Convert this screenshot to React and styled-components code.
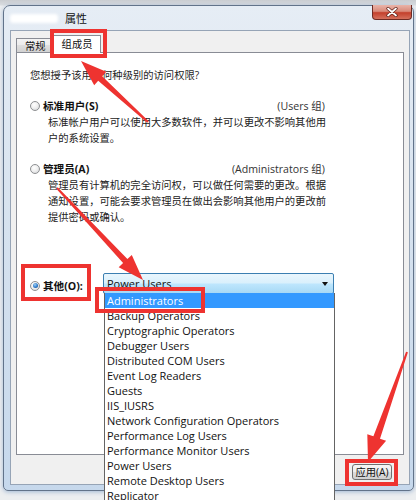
import React from "react";
import styled, { createGlobalStyle } from "styled-components";

const GlobalStyle = createGlobalStyle`
  html, body { margin: 0; padding: 0; overflow: hidden; }
  body {
    background: #e6e8eb;
    font-family: "Open Sans", "Noto Sans CJK SC", sans-serif;
    color: #1e1e1e;
  }
`;

const Page = styled.div`
  position: relative;
  width: 416px;
  height: 500px;
  overflow: hidden;
  box-sizing: border-box;
  padding: 5px 0 0 3px;
  background: linear-gradient(180deg, #c9ccd0 0, #d9dce0 5px, #eceef0 6px);
`;

const Window = styled.div`
  width: 411px;
  height: 486px;
  box-sizing: border-box;
  border: 1px solid #62738a;
  border-radius: 7px 7px 5px 5px;
  background: linear-gradient(180deg, #e6edf5 0%, #d8e3ef 40%, #c6d8ec 100%);
  box-shadow: 0 1px 4px rgba(70, 120, 180, 0.45);
  display: flex;
  flex-direction: column;
`;

const TitleBar = styled.div`
  height: 24px;
  display: flex;
  align-items: flex-start;
  padding-left: 6px;
  flex: none;
`;

const Title = styled.div`
  display: flex;
  align-items: center;
  margin-top: 6px;
  font-size: 11px;
  line-height: 13px;
  color: #111;
`;

const BlurName = styled.span`
  display: inline-block;
  width: 48px;
  height: 9px;
  margin-right: 7px;
  background: #ffffff;
  filter: blur(1.5px);
  border-radius: 3px;
`;

const CloseButton = styled.div`
  margin-left: auto;
  margin-right: 1px;
  margin-top: -1px;
  width: 40px;
  height: 15px;
  box-sizing: border-box;
  border: 1px solid #6e2a22;
  border-top: none;
  border-radius: 0 0 4px 4px;
  background: linear-gradient(180deg, #e9b3a8 0%, #d98a7a 45%, #c4402c 55%, #d5705c 100%);
  display: flex;
  align-items: center;
  justify-content: center;
`;

const Body = styled.div`
  flex: 1;
  margin: 0 3px 5px 6px;
  background: #f0f0f0;
  border: 1px solid #96a4b6;
  display: flex;
  flex-direction: column;
`;

const TabRow = styled.div`
  height: 21px;
  display: flex;
  align-items: flex-end;
  padding-left: 5px;
  flex: none;
`;

const Tab = styled.div`
  position: relative;
  box-sizing: border-box;
  border: 1px solid #898c95;
  border-bottom: none;
  font-size: 10.3px;
  text-align: center;
  color: #111;
  height: ${(p) => (p.$active ? "18px" : "14px")};
  line-height: ${(p) => (p.$active ? "17px" : "14px")};
  padding: 0 ${(p) => (p.$active ? "8px" : "8px")};
  margin: ${(p) => (p.$active ? "0 0 -1px -2px" : "0")};
  z-index: ${(p) => (p.$active ? 2 : 1)};
  background: ${(p) =>
    p.$active
      ? "#ffffff"
      : "linear-gradient(180deg, #f3f3f3 0%, #ebebeb 50%, #dedede 50%, #d2d2d2 100%)"};
`;

const Panel = styled.div`
  position: relative;
  height: 403px;
  margin: 0 5px;
  box-sizing: border-box;
  border: 1px solid #898c95;
  background: #ffffff;
  padding: 14px 0 0 13px;
  flex: none;
`;

const Question = styled.div`
  font-size: 10.3px;
  line-height: 16px;
`;

const OptionHeader = styled.div`
  display: flex;
  align-items: center;
  width: 295px;
  height: 16px;
  margin-top: 15px;
`;

const Radio = styled.span`
  position: relative;
  flex: none;
  width: 10px;
  height: 10px;
  box-sizing: border-box;
  border-radius: 50%;
  border: 1px solid #8e9092;
  background: radial-gradient(circle at 40% 35%, #ffffff 0%, #f0f0f0 45%, #cfd2d5 100%);
  margin-right: 3px;
  &::after {
    content: "";
    display: ${(p) => (p.$checked ? "block" : "none")};
    position: absolute;
    left: 1.5px;
    top: 1.5px;
    width: 5px;
    height: 5px;
    border-radius: 50%;
    background: radial-gradient(circle at 40% 35%, #9fd0f5 0%, #2f7ccc 55%, #103f7a 100%);
  }
`;

const Label = styled.span`
  font-size: 10.6px;
  font-weight: bold;
  line-height: 16px;
  color: #111;
`;

const GroupTag = styled.span`
  margin-left: auto;
  font-size: 10.6px;
  line-height: 16px;
  color: #333;
`;

const Desc = styled.div`
  margin-left: 18px;
  font-size: 10.3px;
  line-height: 16px;
  color: #222;
  white-space: nowrap;
`;

const OtherRow = styled.div`
  display: grid;
  grid-template-columns: 73px 231px;
  align-items: center;
  height: 21px;
  margin-top: 48px;
`;

const OtherLabel = styled.div`
  display: flex;
  align-items: center;
  padding-top: 4px;
`;

const Combo = styled.div`
  position: relative;
  height: 21px;
  box-sizing: border-box;
  border: 1px solid #3c7fb1;
  border-radius: 2px;
  background: linear-gradient(180deg, #eaf6fd 0%, #d9f0fc 48%, #bee6fd 52%, #a7d9f5 100%);
  display: flex;
  align-items: center;
  padding-left: 3px;
  font-size: 11px;
  color: #111;
`;

const ComboArrow = styled.span`
  margin-left: auto;
  margin-right: 5px;
  width: 0;
  height: 0;
  border-left: 3.5px solid transparent;
  border-right: 3.5px solid transparent;
  border-top: 4px solid #111;
`;

const DropList = styled.div`
  position: absolute;
  top: 100%;
  left: 0;
  width: 231px;
  box-sizing: border-box;
  border: 1px solid #646464;
  border-top: none;
  background: #ffffff;
  z-index: 5;
`;

const DropItem = styled.div`
  height: 15px;
  line-height: 15px;
  padding-left: 2px;
  font-size: 11px;
  white-space: nowrap;
  color: ${(p) => (p.$selected ? "#ffffff" : "#111")};
  background: ${(p) => (p.$selected ? "#3399ff" : "transparent")};
`;

const Footer = styled.div`
  flex: 1;
  display: flex;
  justify-content: flex-end;
  align-items: flex-start;
  padding: 9px 17px 0 0;
`;

const ApplyButton = styled.div`
  width: 40px;
  height: 16px;
  box-sizing: border-box;
  border: 1px solid #707070;
  border-radius: 3px;
  background: linear-gradient(180deg, #f6f6f6 0%, #ececec 50%, #dddddd 50%, #d0d0d0 100%);
  font-size: 10.3px;
  line-height: 14px;
  text-align: center;
  color: #111;
`;

const Overlay = styled.svg`
  position: absolute;
  left: 0;
  top: 0;
  width: 416px;
  height: 500px;
  pointer-events: none;
  z-index: 20;
`;

function arrowPoints(tx, ty, hx, hy, tailW, neckW, headW, headL) {
  const dx = hx - tx;
  const dy = hy - ty;
  const len = Math.hypot(dx, dy);
  const ux = dx / len;
  const uy = dy / len;
  const nx = -uy;
  const ny = ux;
  const bx = hx - ux * headL;
  const by = hy - uy * headL;
  const p = (x, y, k) => [x + nx * k, y + ny * k];
  const pts = [
    p(tx, ty, tailW / 2),
    p(bx, by, neckW / 2),
    p(bx, by, headW / 2),
    [hx, hy],
    p(bx, by, -headW / 2),
    p(bx, by, -neckW / 2),
    p(tx, ty, -tailW / 2),
  ];
  return pts.map((q) => q.map((v) => v.toFixed(1)).join(",")).join(" ");
}

const groups = [
  "Administrators",
  "Backup Operators",
  "Cryptographic Operators",
  "Debugger Users",
  "Distributed COM Users",
  "Event Log Readers",
  "Guests",
  "IIS_IUSRS",
  "Network Configuration Operators",
  "Performance Log Users",
  "Performance Monitor Users",
  "Power Users",
  "Remote Desktop Users",
  "Replicator",
];

const RED = "#ee3330";

export default function App() {
  return (
    <Page>
      <GlobalStyle />
      <Window>
        <TitleBar>
          <Title>
            <BlurName />
            属性
          </Title>
          <CloseButton>
            <svg width="12" height="10" viewBox="0 0 12 10">
              <path d="M2 1.5 L10 8.5 M10 1.5 L2 8.5" stroke="#5a1c14" strokeWidth="3.2" strokeLinecap="round" />
              <path d="M2 1.5 L10 8.5 M10 1.5 L2 8.5" stroke="#ffffff" strokeWidth="1.8" strokeLinecap="round" />
            </svg>
          </CloseButton>
        </TitleBar>
        <Body>
          <TabRow>
            <Tab>常规</Tab>
            <Tab $active>组成员</Tab>
          </TabRow>
          <Panel>
            <Question>您想授予该用户何种级别的访问权限?</Question>

            <OptionHeader>
              <Radio />
              <Label>标准用户(S)</Label>
              <GroupTag>(Users 组)</GroupTag>
            </OptionHeader>
            <Desc>
              标准帐户用户可以使用大多数软件，并可以更改不影响其他用
              <br />
              户的系统设置。
            </Desc>

            <OptionHeader>
              <Radio />
              <Label>管理员(A)</Label>
              <GroupTag>(Administrators 组)</GroupTag>
            </OptionHeader>
            <Desc>
              管理员有计算机的完全访问权，可以做任何需要的更改。根据
              <br />
              通知设置，可能会要求管理员在做出会影响其他用户的更改前
              <br />
              提供密码或确认。
            </Desc>

            <OtherRow>
              <OtherLabel>
                <Radio $checked />
                <Label>其他(O):</Label>
              </OtherLabel>
              <Combo>
                Power Users
                <ComboArrow />
                <DropList>
                  {groups.map((g, i) => (
                    <DropItem key={g} $selected={i === 0}>
                      {g}
                    </DropItem>
                  ))}
                </DropList>
              </Combo>
            </OtherRow>
          </Panel>
          <Footer>
            <ApplyButton>应用(A)</ApplyButton>
          </Footer>
        </Body>
      </Window>

      <Overlay viewBox="0 0 416 500">
        <g fill="none" stroke={RED} strokeWidth="4">
          <rect x="52" y="31" width="53" height="25" />
          <rect x="23" y="266" width="66" height="33" />
          <rect x="97" y="289" width="106" height="22" />
          <rect x="347" y="461" width="49" height="23" />
        </g>
        <g fill={RED}>
          <polygon points={arrowPoints(148, 122, 81, 61, 2, 6, 18, 26)} />
          <polygon points={arrowPoints(57, 188, 143, 280, 2, 6, 18, 26)} />
          <polygon points={arrowPoints(407, 352, 368, 462, 2, 7, 20, 26)} />
        </g>
      </Overlay>
    </Page>
  );
}
